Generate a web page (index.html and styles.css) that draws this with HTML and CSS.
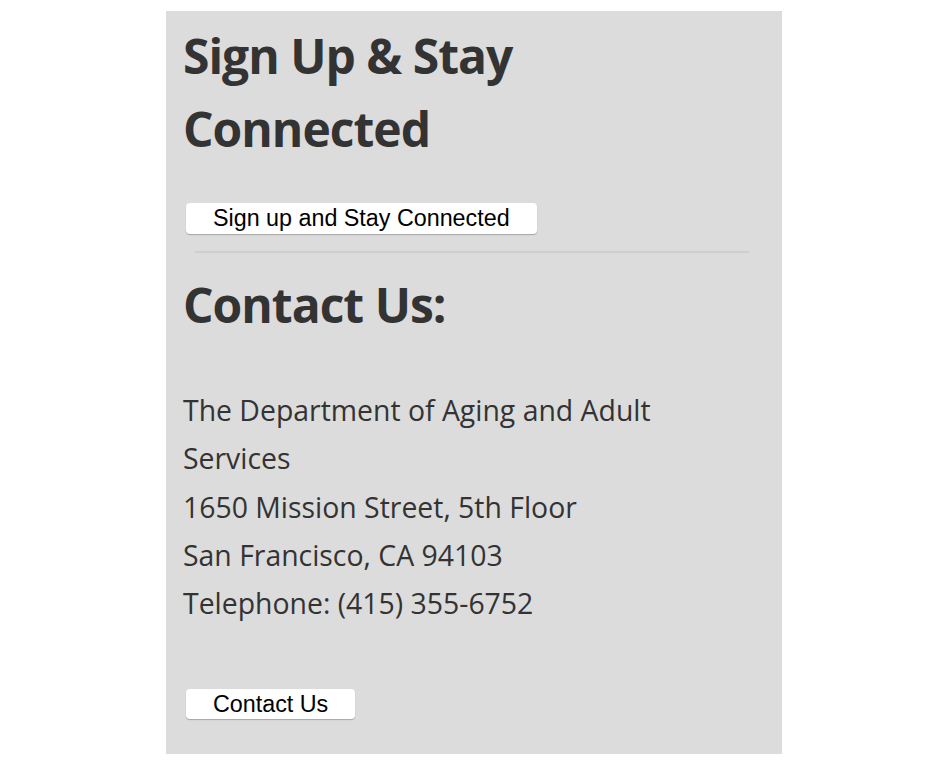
FILE: index.html
```html
<!DOCTYPE html>
<html>
<head>
<meta charset="utf-8">
<link rel="stylesheet" href="styles.css">
</head>
<body>
<div class="panel">
  <h2 class="title">Sign Up &amp; Stay Connected</h2>
  <button class="btn btn-signup">Sign up and Stay Connected</button>
  <hr class="divider">
  <h2 class="title title-contact">Contact Us:</h2>
  <p class="address">The Department of Aging and Adult Services<br>1650 Mission Street, 5th Floor<br>San Francisco, CA 94103<br>Telephone: (415) 355-6752</p>
  <button class="btn btn-contact">Contact Us</button>
</div>
</body>
</html>
```
FILE: styles.css
```css
html, body {
  margin: 0;
  padding: 0;
  background: #ffffff;
}
body {
  padding-top: 11px;
}
.panel {
  width: 616px;
  height: 743px;
  margin: 0 auto;
  background: #dcdcdc;
  box-sizing: border-box;
  padding: 8px 17px 0 17px;
  font-family: "Open Sans", sans-serif;
  color: #333333;
}
.title {
  margin: 0;
  font-size: 48px;
  font-weight: 700;
  line-height: 73px;
  letter-spacing: -1px;
  width: 420px;
}
.btn {
  display: block;
  font-family: "Liberation Sans", Arial, sans-serif;
  font-size: 23.3px;
  line-height: 1;
  color: #000;
  background: #fff;
  border: none;
  border-radius: 4px;
  box-shadow: 0 1px 1px rgba(0,0,0,0.25);
  padding: 0 27px;
  margin-left: 3px;
}
.btn-signup {
  height: 31px;
  margin-top: 38px;
}
.divider {
  border: none;
  border-top: 2px solid #cfcfcf;
  margin: 17px 16px 0 12px;
}
.title-contact {
  margin-top: 15px;
}
.address {
  margin: 45px 0 0 0;
  width: 520px;
  font-size: 28.4px;
  line-height: 48.25px;
}
.btn-contact {
  height: 30px;
  margin-top: 62px;
}
```
